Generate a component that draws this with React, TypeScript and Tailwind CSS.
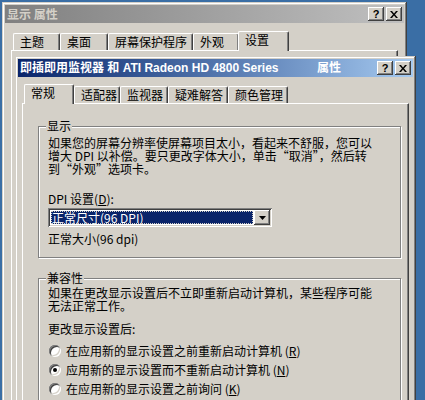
import type { ReactNode } from 'react';

const raised =
  'shadow-[inset_-1px_-1px_0_#404040,inset_1px_1px_0_#fff,inset_-2px_-2px_0_#808080,inset_2px_2px_0_#d4d0c8]';
const windowEdge =
  'shadow-[inset_-1px_-1px_0_#404040,inset_1px_1px_0_#d4d0c8,inset_-2px_-2px_0_#808080,inset_2px_2px_0_#fff]';
const sunken =
  'shadow-[inset_1px_1px_0_#808080,inset_-1px_-1px_0_#fff,inset_2px_2px_0_#404040,inset_-2px_-2px_0_#d4d0c8]';

function CaptionButtons() {
  return (
    <div className="ml-auto flex gap-[2px] mr-[2px]">
      <div className={`w-[16px] h-[14px] bg-[#d4d0c8] ${raised} flex items-center justify-center`}>
        <span className="text-[11px] leading-none font-bold text-black font-['Liberation_Sans',sans-serif] mt-[1px]">?</span>
      </div>
      <div className={`w-[16px] h-[14px] bg-[#d4d0c8] ${raised} flex items-center justify-center`}>
        <svg width="8" height="7" viewBox="0 0 8 7" className="mt-[1px]">
          <path d="M0 0h2l2 2.5L6 0h2L5 3.5 8 7H6L4 4.5 2 7H0l3-3.5z" fill="#000" />
        </svg>
      </div>
    </div>
  );
}

function Tab({ label, w, active }: { label: string; w: string; active?: boolean }) {
  return (
    <div
      className={`${w} ${
        active ? 'h-[20px] -mb-px relative z-10 -ml-px' : 'h-[17px]'
      } bg-[#d4d0c8] border-t border-l border-r border-white border-r-[#404040] rounded-t-[2px] shadow-[inset_-1px_0_0_#808080] pl-[6px] pt-[1px] text-[12px] leading-[14px] whitespace-nowrap`}
    >
      {label}
    </div>
  );
}

function Group({ label, className, children }: { label: string; className: string; children: ReactNode }) {
  return (
    <div className={`relative border border-[#808080] shadow-[1px_1px_0_#fff,inset_1px_1px_0_#fff] ${className}`}>
      <span className="absolute left-[7px] -top-[8px] px-[1px] bg-[#d4d0c8] leading-[13px]">{label}</span>
      {children}
    </div>
  );
}

function Radio({ checked, children }: { checked?: boolean; children: ReactNode }) {
  return (
    <div className="h-[19px] flex items-center gap-[5px]">
      <div className={`ml-[1px] w-[12px] h-[12px] rounded-full bg-white ${sunken} flex items-center justify-center`}>
        {checked && <div className="w-[4px] h-[4px] rounded-full bg-black" />}
      </div>
      <span className="leading-[13px] whitespace-nowrap">{children}</span>
    </div>
  );
}

export default function App() {
  return (
    <div className="w-[425px] h-[400px] bg-[#3a6ea5] relative overflow-hidden text-black font-['Noto_Sans_CJK_SC','Liberation_Sans',sans-serif] text-[12px]">
      {/* back window */}
      <div className={`absolute left-[2px] top-[2px] w-[405px] h-[430px] bg-[#d4d0c8] p-[3px] ${windowEdge}`}>
        <div className="h-[18px] flex items-center bg-gradient-to-r from-[#808080] to-[#c0c0c0] pl-[2px]">
          <span className="text-[12px] font-bold leading-none text-[#d4d0c8]">显示 属性</span>
          <CaptionButtons />
        </div>
        <div className="px-[6px] pt-[8px]">
          <div className="flex items-end h-[19px] pl-[2px]">
            <Tab label="主题" w="w-[47px]" />
            <Tab label="桌面" w="w-[48px]" />
            <Tab label="屏幕保护程序" w="w-[85px]" />
            <Tab label="外观" w="w-[46px]" />
            <Tab label="设置" w="w-[51px]" active />
          </div>
          <div className="h-[360px] border-t border-l border-r border-white border-r-[#404040] shadow-[inset_-1px_0_0_#808080]" />
        </div>
      </div>

      {/* front window */}
      <div className={`absolute left-[15px] top-[56px] w-[401px] h-[380px] bg-[#d4d0c8] p-[3px] ${windowEdge}`}>
        <div className="h-[18px] flex items-center bg-gradient-to-r from-[#0a246a] to-[#a6caf0] pl-[2px] text-white font-bold text-[12px] leading-none font-['Liberation_Sans','Noto_Sans_CJK_SC',sans-serif]">
          <span className="w-[297px] whitespace-nowrap">即插即用监视器 和 ATI Radeon HD 4800 Series</span>
          <span>属性</span>
          <CaptionButtons />
        </div>
        <div className="px-[4px] pt-[7px]">
          <div className="flex items-end h-[19px] pl-[3px]">
            <Tab label="常规" w="w-[50px]" active />
            <Tab label="适配器" w="w-[46px]" />
            <Tab label="监视器" w="w-[48px]" />
            <Tab label="疑难解答" w="w-[60px]" />
            <Tab label="颜色管理" w="w-[60px]" />
          </div>
          <div className="h-[320px] border-t border-l border-r border-white border-r-[#404040] shadow-[inset_-1px_0_0_#808080] pl-[15px] pt-[22px]">
            <Group label="显示" className="w-[363px] h-[132px] pt-[9px] pl-[9px]">
              <p className="leading-[13px] whitespace-nowrap">
                如果您的屏幕分辨率使屏幕项目太小，看起来不舒服，您可以
                <br />
                增大 DPI 以补偿。要只更改字体大小，单击“取消”，然后转
                <br />
                到“外观”选项卡。
              </p>
              <div className="mt-[17px] leading-[13px]">
                DPI 设置(<span className="underline">D</span>):
              </div>
              <div className={`mt-[3px] w-[224px] h-[19px] bg-white p-[2px] flex ${sunken}`}>
                <div className="flex-1 my-[1px] ml-[1px] mr-[1px] bg-[#0a246a] text-white leading-[13px] pl-[1px] outline outline-1 outline-dotted outline-[#d4d0c8] -outline-offset-1">
                  正常尺寸(96 DPI)
                </div>
                <div className={`w-[16px] h-[15px] bg-[#d4d0c8] ${raised} flex items-center justify-center`}>
                  <svg width="7" height="4" viewBox="0 0 7 4">
                    <path d="M0 0h7L3.5 4z" fill="#000" />
                  </svg>
                </div>
              </div>
              <div className="mt-[5px] leading-[13px]">正常大小(96 dpi)</div>
            </Group>

            <Group label="兼容性" className="mt-[20px] w-[363px] h-[140px] pt-[7px] pl-[9px]">
              <p className="leading-[13px] whitespace-nowrap">
                如果在更改显示设置后不立即重新启动计算机，某些程序可能
                <br />
                无法正常工作。
              </p>
              <div className="mt-[10px] leading-[13px]">更改显示设置后:</div>
              <div className="mt-[6px]">
                <Radio>
                  在应用新的显示设置之前重新启动计算机 (<span className="underline">R</span>)
                </Radio>
                <Radio checked>
                  应用新的显示设置而不重新启动计算机 (<span className="underline">N</span>)
                </Radio>
                <Radio>
                  在应用新的显示设置之前询问 (<span className="underline">K</span>)
                </Radio>
              </div>
            </Group>
          </div>
        </div>
      </div>
    </div>
  );
}
